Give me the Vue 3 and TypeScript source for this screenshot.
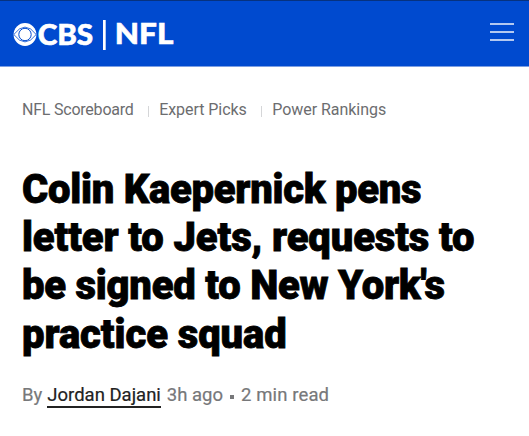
<template>
  <div class="page">
    <header class="site-header">
      <svg
        class="logo"
        width="166"
        height="44"
        viewBox="0 -4 166 44"
        role="img"
        aria-label="CBS NFL"
      >
        <circle cx="12" cy="17.5" r="11.4" fill="#fff" />
        <path d="M0.8 17.5Q12 2.7 23.2 17.5Q12 32.3 0.8 17.5Z" fill="#fff" stroke="#004acf" stroke-width="0.8" />
        <circle cx="12" cy="17.5" r="6.2" fill="#fff" stroke="#004acf" stroke-width="1" />
        <text class="logo-text" x="24.7" y="28" textLength="55.5" lengthAdjust="spacingAndGlyphs">CBS</text>
        <rect x="90" y="3" width="2.7" height="30" fill="#fff" />
        <text class="logo-text" x="101.8" y="26.9" textLength="58.5" lengthAdjust="spacingAndGlyphs">NFL</text>
      </svg>
      <button class="menu-button" type="button" aria-label="Menu">
        <span class="menu-bar" />
        <span class="menu-bar" />
        <span class="menu-bar" />
      </button>
    </header>

    <nav class="sub-nav">
      <a v-for="link in links" :key="link" class="sub-nav-link">{{ link }}</a>
    </nav>

    <article class="article">
      <h1 class="headline">
        <span v-for="(line, i) in headline" :key="line" class="headline-line" :class="`line-${i + 1}`">{{ line }}</span>
      </h1>
      <p class="byline">
        <span class="by">By</span>
        <a class="author">{{ author }}</a>
        <span class="age">{{ age }}</span>
        <span class="dot" />
        <span class="read-time">{{ readTime }}</span>
      </p>
    </article>
  </div>
</template>

<script setup lang="ts">
const links: string[] = ['NFL Scoreboard', 'Expert Picks', 'Power Rankings'];

const headline: string[] = [
  'Colin Kaepernick pens',
  'letter to Jets, requests to',
  "be signed to New York's",
  'practice squad',
];

const author = 'Jordan Dajani';
const age = '3h ago';
const readTime = '2 min read';
</script>

<style>
body {
  margin: 0;
  background: #fff;
}
</style>

<style scoped>
.page {
  min-height: 436px;
  font-family: Roboto, 'Liberation Sans', sans-serif;
}

.site-header {
  display: flex;
  align-items: center;
  justify-content: space-between;
  box-sizing: border-box;
  height: 67px;
  padding: 3px 15px 0 13px;
  background: #004acf;
  border-top: 1px solid #06327f;
  border-bottom: 1px solid #7c9fe3;
}

.logo {
  display: block;
  overflow: visible;
}

.logo-text {
  font-family: Lato, sans-serif;
  font-size: 29px;
  font-weight: 900;
  fill: #fff;
  stroke: #fff;
  stroke-width: 0.6px;
}

.menu-button {
  display: flex;
  flex-direction: column;
  gap: 6px;
  margin-top: -6px;
  padding: 0;
  border: 0;
  background: none;
}

.menu-bar {
  width: 24px;
  height: 2px;
  background: #b3c8f0;
}

.sub-nav {
  display: flex;
  padding: 33px 22px 0;
  font-size: 16px;
  line-height: 20px;
  color: #6c6d6f;
}

.sub-nav-link {
  display: flex;
  align-items: center;
  letter-spacing: -0.05px;
}

.sub-nav-link:first-child {
  letter-spacing: -0.22px;
}

.sub-nav-link + .sub-nav-link::before {
  content: '';
  width: 1px;
  height: 11px;
  margin: 2px 10.5px 0 14px;
  background: #d5d6d8;
}

.article {
  padding: 45.5px 22px 0;
}

.headline {
  margin: 0;
  font-size: 40px;
  font-weight: 900;
  line-height: 48.4px;
  color: #000;
  -webkit-text-stroke: 0.8px #000;
}

.headline-line {
  display: block;
  white-space: nowrap;
}

.line-1 {
  letter-spacing: -0.27px;
}

.line-2 {
  letter-spacing: -0.13px;
}

.line-3 {
  letter-spacing: -0.24px;
}

.line-4 {
  letter-spacing: -0.08px;
}

.byline {
  display: flex;
  align-items: baseline;
  margin: 23.5px 0 0;
  font-size: 18.5px;
  line-height: 24px;
  color: #77787a;
  -webkit-text-stroke: 0.2px currentColor;
}

.author {
  margin: 0 6px 0 5px;
  border-bottom: 2px solid #222;
  line-height: 22px;
  color: #222;
}

.dot {
  align-self: center;
  width: 4px;
  height: 4px;
  margin: 3px 7px 0;
  background: #77787a;
}

.read-time {
  letter-spacing: 0.12px;
}
</style>
